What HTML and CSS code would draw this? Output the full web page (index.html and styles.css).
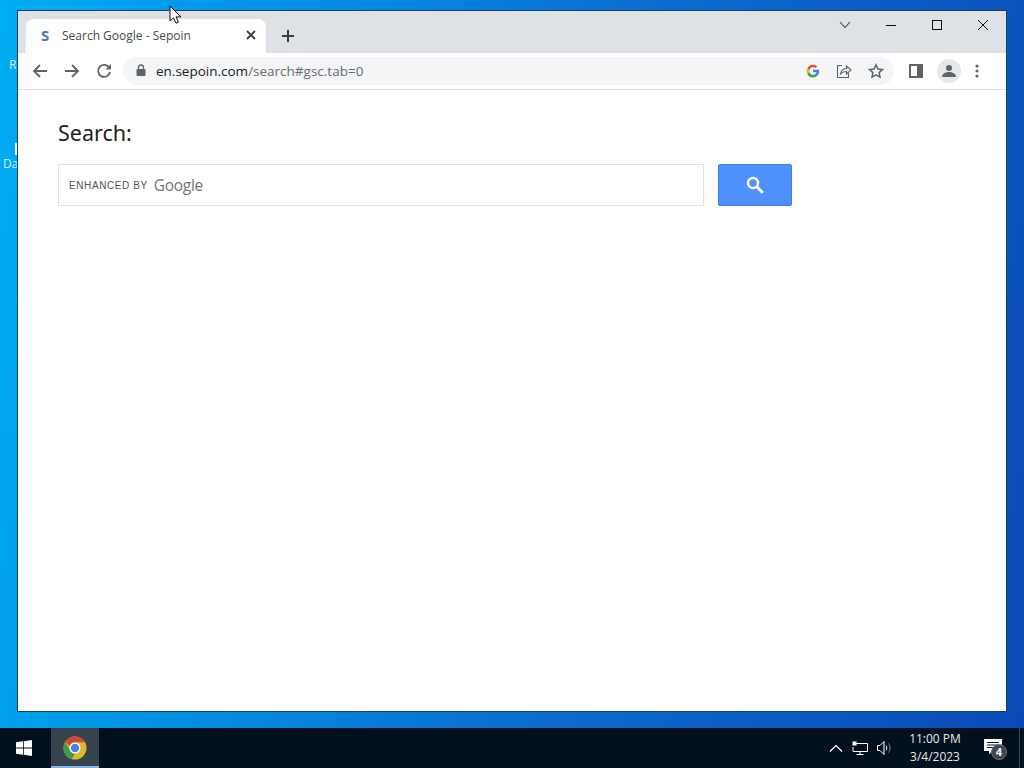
FILE: index.html
```html
<!DOCTYPE html>
<html lang="en">
<head>
<meta charset="utf-8">
<title>Search Google - Sepoin</title>
<link rel="stylesheet" href="styles.css">
</head>
<body>
<div class="desktop">
  <div class="wallpaper">
    <span class="desk-label label-r">R</span>
    <span class="desk-bar"></span>
    <span class="desk-label label-da">Da</span>
    <section class="window">
      <header class="tabstrip">
        <div class="tab">
          <span class="tab-favicon">S</span>
          <span class="tab-title">Search Google - Sepoin</span>
          <svg class="tab-close" width="10" height="10" viewBox="0 0 10 10"><path d="M1 1l8 8M9 1l-8 8" stroke="#3c4043" stroke-width="1.8" fill="none"/></svg>
        </div>
        <svg class="new-tab" width="14" height="14" viewBox="0 0 14 14"><path d="M7 1v12M1 7h12" stroke="#3c4043" stroke-width="2" fill="none"/></svg>
        <div class="caption">
          <svg class="cap-chevron" width="12" height="8" viewBox="0 0 12 8"><path d="M1 1l5 5.5L11 1" stroke="#3c4043" stroke-width="1.1" fill="none"/></svg>
          <svg class="cap-btn" width="46" height="10" viewBox="0 0 46 10"><path d="M18 5.5h10" stroke="#111" stroke-width="1" fill="none"/></svg>
          <svg class="cap-btn" width="46" height="10" viewBox="0 0 46 10"><rect x="18.5" y=".5" width="9" height="9" stroke="#111" fill="none"/></svg>
          <svg class="cap-btn" width="46" height="10" viewBox="0 0 46 10"><path d="M18 0l10 10M28 0L18 10" stroke="#111" stroke-width="1" fill="none"/></svg>
        </div>
      </header>
      <nav class="toolbar">
        <svg class="tool" width="16" height="16" viewBox="0 0 16 16"><path d="M15 8H2M8 2L2 8l6 6" stroke="#5f6368" stroke-width="1.8" fill="none"/></svg>
        <svg class="tool" width="16" height="16" viewBox="0 0 16 16"><path d="M1 8h13M8 2l6 6-6 6" stroke="#5f6368" stroke-width="1.8" fill="none"/></svg>
        <svg class="tool" width="16" height="16" viewBox="0 0 16 16"><path d="M13.5 5.2A6 6 0 1 0 14 9" stroke="#5f6368" stroke-width="1.8" fill="none"/><path d="M15 1v5.5H9.5z" fill="#5f6368"/></svg>
        <div class="omnibox">
          <svg class="lock" width="10" height="13" viewBox="0 0 10 13"><path d="M2.5 5V3.5a2.5 2.5 0 0 1 5 0V5" stroke="#5f6368" stroke-width="1.3" fill="none"/><rect x="0.5" y="5" width="9" height="7" rx="1" fill="#5f6368"/></svg>
          <span class="url"><span class="url-host">en.sepoin.com</span>/search#gsc.tab=0</span>
          <svg class="omni-icon g-icon" width="14" height="14" viewBox="0 0 48 48"><path fill="#4285f4" d="M45 24.5c0-1.6-.1-3.100-.4-4.500H24v8.500h11.800a10 10 0 0 1-4.400 6.600v5.500h7.100C42.700 36.700 45 31.100 45 24.500z"/><path fill="#34a853" d="M24 46c5.900 0 10.900-2 14.500-5.400l-7.100-5.500c-2 1.300-4.500 2.100-7.400 2.100-5.700 0-10.500-3.800-12.200-9H4.500v5.700A22 22 0 0 0 24 46z"/><path fill="#fbbc05" d="M11.800 28.700a13 13 0 0 1 0-8.400v-5.700H4.500a22 22 0 0 0 0 19.800z"/><path fill="#ea4335" d="M24 10.700c3.200 0 6.100 1.100 8.400 3.300l6.300-6.300A22 22 0 0 0 4.500 14.600l7.300 5.700c1.700-5.200 6.500-9.600 12.200-9.600z"/></svg>
          <svg class="omni-icon share" width="16" height="16" viewBox="0 0 16 16"><path d="M6 2.500H1.500v12h11V10" stroke="#5f6368" stroke-width="1.1" fill="none"/><path d="M4.500 11c.6-3.500 3-5.500 6-5.500V3l4.500 4-4.500 4V8.500c-2.500 0-4.500.7-6 2.500z" stroke="#5f6368" stroke-width="1.1" fill="none"/></svg>
          <svg class="omni-icon star" width="16" height="16" viewBox="0 0 16 16"><path d="M8 1.800l1.900 4.200 4.600.5-3.400 3.100.9 4.500L8 11.800l-4 2.300.9-4.500L1.500 6.500l4.600-.5z" stroke="#5f6368" stroke-width="1.5" fill="none"/></svg>
        </div>
        <svg class="side-panel" width="14" height="14" viewBox="0 0 14 14"><path fill-rule="evenodd" d="M0 0h14v14H0zM2 2v10h6V2z" fill="#5f6368"/></svg>
        <div class="avatar"><svg width="14" height="12" viewBox="0 0 14 12"><circle cx="7" cy="3" r="3" fill="#5f6368"/><path d="M0 12c0-3.500 3.500-5 7-5s7 1.500 7 5z" fill="#5f6368"/></svg></div>
        <svg class="menu" width="4" height="14" viewBox="0 0 4 14"><circle cx="2" cy="2" r="1.600" fill="#5f6368"/><circle cx="2" cy="7" r="1.600" fill="#5f6368"/><circle cx="2" cy="12" r="1.600" fill="#5f6368"/></svg>
      </nav>
      <main class="page">
        <h1 class="heading">Search:</h1>
        <form class="search-row">
          <div class="search-box"><span class="enhanced">ENHANCED BY</span><span class="google-word">Google</span></div>
          <div class="search-btn"><svg width="18" height="18" viewBox="0 0 18 18"><circle cx="7" cy="7" r="5" stroke="#fff" stroke-width="2.400" fill="none"/><path d="M10.800 10.800l6 6" stroke="#fff" stroke-width="2.800" fill="none"/></svg></div>
        </form>
      </main>
    </section>
    <svg class="cursor" width="13" height="19" viewBox="0 0 13 19"><path d="M1 1v15l3.500-3.200 2.500 5.400 2.400-1.100-2.400-5.200H12z" fill="#fff" stroke="#111" stroke-width="1"/></svg>
  </div>
  <footer class="taskbar">
    <svg class="start" width="16" height="16" viewBox="0 0 16 16"><path fill="#fff" d="M0 2.300l7-1v6.300H0zM7.800 1.200L16 0v7.600H7.800zM0 8.400h7v6.300l-7-1zM7.800 8.400H16V16l-8.200-1.200z"/></svg>
    <div class="task-app"><svg width="24" height="24" viewBox="0 0 48 48"><circle cx="24" cy="24" r="23" fill="#e0b82c"/><path d="M24 1a23 23 0 0 1 20 11.500H24a11.500 11.500 0 0 0-10.800 7.600L4.500 12A23 23 0 0 1 24 1z" fill="#d64437"/><path d="M4.500 12l10 17.300A11.500 11.500 0 0 0 24 35.500L17.500 46.100A23 23 0 0 1 4.500 12z" fill="#3f9b4a"/><circle cx="24" cy="24" r="11" fill="#fff"/><circle cx="24" cy="24" r="8.500" fill="#4a7fe0"/></svg></div>
    <div class="tray">
      <svg class="tray-icon" width="14" height="8" viewBox="0 0 14 8"><path d="M1 7.500l6-6 6 6" stroke="#fff" stroke-width="1.200" fill="none"/></svg>
      <svg class="tray-icon" width="16" height="14" viewBox="0 0 16 14"><path d="M4 2.500h11.500v8H1V6M8 10.500v3M4.500 13.500h7" stroke="#fff" fill="none"/><rect x=".5" y=".5" width="4" height="4" fill="#fff"/></svg>
      <svg class="tray-icon" width="15" height="14" viewBox="0 0 15 14"><path d="M.5 4.500h2.500l4-4v13l-4-4H.5zM9 4.500c1 1.500 1 3.500 0 5" stroke="#fff" fill="none"/><path d="M11.500 2.500c2 2.500 2 6.500 0 9" stroke="#8a9298" fill="none"/></svg>
      <div class="clock"><span>11:00 PM</span><span>3/4/2023</span></div>
      <div class="notify">
        <svg width="18" height="16" viewBox="0 0 18 16"><path fill="#fff" d="M0 0h18v12H8l-3 3.500V12H0z"/><path d="M3 3.500h12M3 6h12M3 8.500h8" stroke="#0b1b2b" stroke-width="1" fill="none"/></svg>
        <span class="badge">4</span>
      </div>
      <span class="show-desktop"></span>
    </div>
  </footer>
</div>
</body>
</html>
```
FILE: styles.css
```css
* { box-sizing: border-box; }
html, body { margin: 0; padding: 0; }
body { width: 1024px; height: 768px; overflow: hidden; font-family: "Open Sans", "Liberation Sans", sans-serif; }
.desktop { width: 1024px; height: 768px; display: flex; flex-direction: column; }
.wallpaper {
  position: relative; flex: 1;
  background: linear-gradient(100deg, #00aef3 0%, #009fee 12%, #0a6fd0 55%, #0a4ab8 100%);
}
.desk-label { position: absolute; color: #cfefff; font-size: 12px; line-height: 14px; }
.label-r { left: 9px; top: 58px; }
.label-da { left: 3px; top: 157px; }
.desk-bar { position: absolute; left: 15px; top: 143px; width: 3px; height: 12px; background: #e8f6ff; }
.window {
  position: absolute; left: 17px; top: 10px; width: 990px; height: 702px;
  border: 1px solid #17406b; display: flex; flex-direction: column; background: #fff;
}
.tabstrip { height: 42px; background: #dee1e6; display: flex; align-items: flex-end; padding-left: 8px; flex: none; }
.tab {
  width: 240px; height: 34px; background: #fff; border-radius: 8px 8px 0 0;
  display: flex; align-items: center; padding: 0 10px 2px 15px;
}
.tab-favicon { width: 21px; font: bold 15px "Open Sans", sans-serif; color: #4a76b8; flex: none; }
.tab-title { flex: 1; font-size: 12px; color: #45494d; white-space: nowrap; }
.new-tab { margin: 0 0 10px 15px; }
.caption { margin-left: auto; align-self: flex-start; display: flex; align-items: center; height: 28px; padding-top: 0; }
.cap-chevron { margin-right: 17px; }
.cap-btn { display: block; }
.toolbar { height: 37px; flex: none; background: #fff; border-bottom: 1px solid #dadce0; display: flex; align-items: center; padding: 0 0 1px 14px; }
.tool { margin-right: 16px; flex: none; }
.omnibox {
  width: 771px; height: 28px; margin-left: -5px; border-radius: 14px; background: #f4f5f6;
  display: flex; align-items: center; padding: 0 10px 0 13px; flex: none;
}
.lock { flex: none; }
.url { margin-left: 10px; font-size: 13.500px; color: #6a6e72; white-space: nowrap; flex: 1; }
.url-host { color: #202124; }
.omni-icon { flex: none; margin-left: 16px; }
.g-icon { margin-left: 0; }
.side-panel { flex: none; margin-left: 15px; }
.avatar { width: 24px; height: 24px; border-radius: 50%; background: #e6e7ea; margin-left: 14px; display: flex; align-items: center; justify-content: center; flex: none; }
.menu { flex: none; margin-left: 14px; }
.page { flex: 1; padding: 29px 40px; background: #fff; }
.heading { margin: 0; font: 400 21.500px/28px "Noto Sans", sans-serif; color: #222; }
.search-row { display: flex; margin: 17px 0 0; }
.search-box { width: 646px; height: 42px; border: 1px solid #dfe1e5; display: flex; align-items: center; padding-left: 10px; background: #fff; }
.enhanced { font: 10px "Liberation Sans", sans-serif; letter-spacing: .6px; color: #555; }
.google-word { margin-left: 6px; font: 500 15.500px "Open Sans", sans-serif; color: #707478; letter-spacing: -.3px; }
.search-btn { width: 74px; height: 42px; margin-left: 14px; background: #4d90fe; border: 1px solid #3f7fe8; border-radius: 2px; display: flex; align-items: center; justify-content: center; }
.cursor { position: absolute; left: 169px; top: 5px; }
.taskbar { height: 40px; flex: none; background: #03101d; display: flex; align-items: center; }
.start { margin-left: 16px; flex: none; }
.task-app { width: 48px; height: 40px; margin-left: 19px; background: #37444f; border-bottom: 2px solid #8ab4e8; display: flex; align-items: center; justify-content: center; flex: none; padding-top: 2px; }
.tray { margin-left: auto; display: flex; align-items: center; height: 100%; }
.tray-icon { flex: none; margin-right: 9px; }
.clock { width: 62px; margin-left: 3px; display: flex; flex-direction: column; align-items: center; font: 12px/18px "Open Sans", sans-serif; color: #e6e9ec; }
.notify { position: relative; width: 24px; height: 20px; margin-left: 18px; }
.badge { position: absolute; left: 7px; top: 6px; width: 16px; height: 16px; border-radius: 50%; background: #3d464e; border: 1px solid #6a7278; color: #fff; font: bold 11px/14px "Open Sans", sans-serif; text-align: center; }
.show-desktop { width: 1px; height: 100%; margin-left: 11px; background: #3a4650; margin-right: 4px; }
```
